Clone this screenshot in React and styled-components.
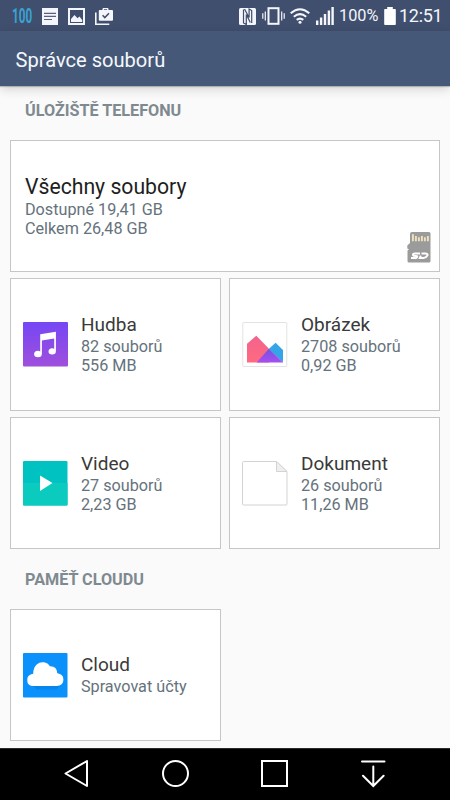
import React from 'react';
import styled, { createGlobalStyle } from 'styled-components';

const GlobalStyle = createGlobalStyle`
  * {
    box-sizing: border-box;
  }
  body {
    margin: 0;
    background: #fafafa;
    font-family: Roboto, 'Noto Sans', sans-serif;
  }
  svg {
    display: block;
    flex: none;
  }
`;

const Screen = styled.div`
  display: flex;
  flex-direction: column;
  width: 450px;
  height: 800px;
  overflow: hidden;
  background: #fafafa;
`;

const StatusBar = styled.header`
  display: flex;
  justify-content: space-between;
  align-items: center;
  flex: none;
  height: 31px;
  padding: 1px 10px 0 12px;
  background: #404f6e;
  color: #f4f6fb;
`;

const StatusGroup = styled.div`
  display: flex;
  align-items: center;
  gap: ${props => props.gap};
`;

const BatteryWidget = styled.span`
  width: 20px;
  height: 20px;
  font-size: 19.5px;
  font-weight: 700;
  line-height: 21px;
  color: #39a3d3;
  transform: scaleX(0.6);
  transform-origin: left center;
`;

const Percent = styled.span`
  width: 39px;
  font-size: 16.3px;
  line-height: 20px;
  white-space: nowrap;
`;

const Clock = styled.span`
  width: 41px;
  margin-left: -2px;
  font-size: 18px;
  line-height: 20px;
  letter-spacing: -0.3px;
  white-space: nowrap;
`;

const AppBar = styled.div`
  display: flex;
  align-items: center;
  flex: none;
  height: 55px;
  padding: 3px 15.5px 0;
  background: #465878;
  box-shadow: 0 1px 1px rgba(0, 0, 0, 0.2), 0 3px 10px rgba(0, 0, 0, 0.17);
  z-index: 1;
`;

const AppTitle = styled.h1`
  margin: 0;
  font-size: 20.1px;
  font-weight: 400;
  line-height: 24px;
  color: #f5f8fc;
`;

const Content = styled.main`
  flex: 1;
  padding: 0 10px;
`;

const SectionTitle = styled.h2`
  height: ${props => props.height};
  margin: 0;
  padding: ${props => props.top} 15px 0;
  font-size: 16.2px;
  font-weight: 700;
  line-height: 20px;
  color: #7f8a90;
`;

const Grid = styled.div`
  display: grid;
  grid-template-columns: 211px 211px;
  grid-template-rows: 132px 133px 132px;
  gap: 6px 8px;
`;

const CloudGrid = styled(Grid)`
  grid-template-rows: 132px;
`;

const Card = styled.section`
  display: flex;
  align-items: center;
  gap: 13px;
  grid-column: ${props => (props.wide ? '1 / -1' : 'auto')};
  padding: ${props => (props.wide ? '0 8px 0 14px' : '0 12px')};
  border: 1px solid #c4c6c7;
  background: #fff;
`;

const CardText = styled.div`
  flex: 1;
  padding-bottom: ${props => (props.large ? '0' : '1px')};
`;

const CardTitle = styled.h3`
  margin: 0;
  font-size: ${props => (props.large ? '21.2px' : '19px')};
  font-weight: 400;
  line-height: ${props => (props.large ? '26px' : '24px')};
  color: ${props => (props.large ? '#1e1e1e' : '#3a3a3a')};
  white-space: nowrap;
`;

const CardLine = styled.p`
  margin: 0;
  font-size: 16.2px;
  line-height: 19px;
  color: #65727c;
  white-space: nowrap;
`;

const SdSlot = styled.div`
  align-self: flex-end;
  padding-bottom: 8px;
`;

const NavBar = styled.nav`
  display: flex;
  align-items: center;
  flex: none;
  height: 52px;
  padding: 0 27px 2px;
  border-top: 1px solid #2a2a2a;
  background: #000;
`;

const NavButton = styled.button`
  display: flex;
  justify-content: center;
  width: 99px;
  padding: 0;
  border: 0;
  background: none;
`;

const NoteIcon = () => (
  <svg width="16" height="17" viewBox="0 0 16 17">
    <path fill="#f4f6fb" d="M0 0h16v17H0z" />
    <path stroke="#56627c" strokeWidth="1.2" d="M2 5.3h12M2 8.4h12M2 11.5h8" />
  </svg>
);

const PhotoIcon = () => (
  <svg width="17" height="17" viewBox="0 0 17 17">
    <path fill="none" stroke="#f4f6fb" strokeWidth="2" d="M1 1h15v15H1z" />
    <path fill="#f4f6fb" d="M3 14v-3l3.5-4 3 3.2 2-1.7L14.2 12v2z" />
  </svg>
);

const ShopIcon = () => (
  <svg width="18" height="17" viewBox="0 0 18 17">
    <path
      fill="#f4f6fb"
      fillRule="evenodd"
      d="M7.5 2V1q0-1 1-1h4q1 0 1 1v1H17q1 0 1 1v8.7q0 1-1 1H4.8q-1 0-1-1V3q0-1 1-1zM9 2h3V1.300H9z"
    />
    <path fill="none" stroke="#f4f6fb" strokeWidth="1.6" d="M.8 4.500v11.700h13.500" />
    <path fill="none" stroke="#404f6e" strokeWidth="1.5" d="M7.6 7.300l2.200 2.300 4.200-4.400" />
  </svg>
);

const NfcIcon = () => (
  <svg width="17" height="17" viewBox="0 0 17 17">
    <rect width="17" height="17" rx="1.5" fill="#f4f6fb" />
    <path
      fill="none"
      stroke="#404f6e"
      strokeWidth="1.2"
      d="M4.500 1.500V15l2.800 1.500V6.500l4 8M5.500 1l4.600 8.500V1l2.600 1.500V15"
    />
  </svg>
);

const VibrateIcon = () => (
  <svg width="23" height="18" viewBox="0 0 23 18">
    <rect x="6.5" y="1.2" width="10" height="15.6" fill="none" stroke="#f4f6fb" strokeWidth="2" />
    <path stroke="#f4f6fb" strokeWidth="1.2" d="M.8 6.300v5.400M3.300 4.500v9M19.700 4.500v9M22.200 6.300v5.400" />
  </svg>
);

const WifiIcon = () => (
  <svg width="20" height="16" viewBox="0 0 20 16">
    <g fill="none" stroke="#f4f6fb" strokeWidth="2">
      <path d="M.7 5.300q9.300-8 18.600 0" />
      <path d="M3.800 8.700q6.200-5.200 12.400 0" />
      <path d="M6.700 11.900q3.300-2.600 6.600 0" />
    </g>
    <circle cx="10" cy="14.3" r="1.5" fill="#f4f6fb" />
  </svg>
);

const SignalIcon = () => (
  <svg width="18" height="18" viewBox="0 0 18 18">
    <path
      fill="#f4f6fb"
      d="M0 13.500h2.400V18H0zM3.900 10.500h2.400V18H3.900zM7.800 7h2.400v11H7.800zM11.700 3.500h2.400V18h-2.400zM15.400 0h2.400v18h-2.400z"
    />
  </svg>
);

const BatteryIcon = () => (
  <svg width="12" height="18" viewBox="0 0 12 18">
    <path fill="#fff" d="M3.2 0h5.600v2H11q.8 0 .8.800v14.400q0 .8-.8.800H1q-.8 0-.8-.8V2.800Q.2 2 1 2h2.200z" />
  </svg>
);

const SdIcon = () => (
  <svg width="24" height="31" viewBox="0 0 24 31">
    <path
      fill="#9b9b9b"
      d="M5 0H22q1.500 0 1.500 1.500v27.500q0 1.500-1.500 1.500H2Q.5 30.500.5 29V18.500L2 17.300l-1.700-.8v-3L3 11V2q0-2 2-2z"
    />
    <path
      stroke="#eee3bd"
      strokeWidth="1.9"
      d="M5.900 2.200v7M8.900 4v5.200M11.900 5.200v4M14.900 4v5.200M17.900 5.200v4M20.900 4v5.200"
    />
    <path
      fill="none"
      stroke="#fff"
      strokeWidth="2"
      d="M13 21.500H8q-2 0-2 1.200t2.300 1.200q2.400 0 1.800 1.200t-2.300 1H4M14.500 21.500h3.800q3 0 2 2.200t-4 2.400h-3.500l1-2.500"
    />
  </svg>
);

const MusicIcon = () => (
  <svg width="45" height="45" viewBox="0 0 45 45">
    <defs>
      <linearGradient id="music" x1="0" y1="0" x2="0" y2="1">
        <stop offset="0" stopColor="#7547f5" />
        <stop offset="1" stopColor="#a04fdc" />
      </linearGradient>
    </defs>
    <rect width="45" height="44.500" rx="1" fill="url(#music)" />
    <path
      fill="#fff"
      d="M17.200 12.300l15.700-2.500v19.500q0 3.200-3.700 3.200t-3.700-3 3.800-3.300q1 0 1.900.5V16.500l-12.300 2v13.300q0 3.500-3.900 3.500t-3.900-3.200 3.900-3.300q1.200 0 2.200.6z"
    />
  </svg>
);

const PictureIcon = () => (
  <svg width="46" height="45" viewBox="0 0 46 45">
    <defs>
      <linearGradient id="pink" x1="0" y1="0" x2="0" y2="1">
        <stop offset="0" stopColor="#f2648d" />
        <stop offset="1" stopColor="#ff6a80" />
      </linearGradient>
      <linearGradient id="violet" x1="0" y1="0" x2="0" y2="1">
        <stop offset="0" stopColor="#6f55df" />
        <stop offset="1" stopColor="#a94df0" />
      </linearGradient>
    </defs>
    <rect x=".8" y=".5" width="44" height="44" rx=".5" fill="#fff" stroke="#e3e3e3" />
    <path fill="url(#pink)" d="M5 21.700l9.300-8L27 26.700V40.500H5z" />
    <path fill="#35a5e8" d="M26.700 27l6.900-6.300 7.400 7.200v12.600z" />
    <path fill="url(#violet)" d="M26.900 26.700L41 40.500H14.700z" />
  </svg>
);

const VideoIcon = () => (
  <svg width="45" height="45" viewBox="0 0 45 45">
    <rect width="44.5" height="44.5" rx="1" fill="#00c2c0" />
    <path fill="#0acbbd" d="M0 22h44.500v21.500q0 1-1 1H1q-1 0-1-1z" />
    <path fill="#fff" d="M17 14.500L29.500 22 17 30z" />
  </svg>
);

const DocumentIcon = () => (
  <svg width="46" height="45" viewBox="0 0 46 45">
    <path fill="#fff" stroke="#d3d3d3" d="M1.500.5h33l10.500 10V43q0 1-1 1H1.500q-1 0-1-1V1.500q0-1 1-1z" />
    <path fill="#efefef" stroke="#d3d3d3" d="M34.500.5v10H45z" />
  </svg>
);

const CloudIcon = () => (
  <svg width="45" height="45" viewBox="0 0 45 45">
    <rect width="44.5" height="44.5" rx="1" fill="#0a91fb" />
    <path fill="#0785ea" d="M7.500 31l7 5.500h19L39 30z" />
    <path
      fill="#fff"
      d="M10.500 33q-6.300 0-6.300-6 0-5.500 6-6.300 0-6 3.500-9.200 3-2.800 7.200-2.200 4 .6 6 4 7-.300 7.400 7 6.100 1 6.100 6.200 0 6.500-6.700 6.500z"
    />
  </svg>
);

const BackIcon = () => (
  <svg width="28" height="28" viewBox="0 0 28 28">
    <path fill="none" stroke="#fff" strokeWidth="2" strokeLinejoin="round" d="M24 1v25L2.500 13.500z" />
  </svg>
);

const HomeIcon = () => (
  <svg width="28" height="28" viewBox="0 0 28 28">
    <circle cx="13.5" cy="13.5" r="12.5" fill="none" stroke="#fff" strokeWidth="2" />
  </svg>
);

const RecentIcon = () => (
  <svg width="28" height="28" viewBox="0 0 28 28">
    <path fill="none" stroke="#fff" strokeWidth="2" d="M1 1h25v25H1z" />
  </svg>
);

const PullDownIcon = () => (
  <svg width="28" height="28" viewBox="0 0 28 28">
    <path
      fill="none"
      stroke="#fff"
      strokeWidth="2"
      strokeLinecap="round"
      d="M2 1.500h22.500M13.300 6.500v19M3 15.700l10.300 10.300 10.300-10.300"
    />
  </svg>
);

const categories = [
  { title: 'Hudba', lines: ['82 souborů', '556 MB'], Icon: MusicIcon },
  { title: 'Obrázek', lines: ['2708 souborů', '0,92 GB'], Icon: PictureIcon },
  { title: 'Video', lines: ['27 souborů', '2,23 GB'], Icon: VideoIcon },
  { title: 'Dokument', lines: ['26 souborů', '11,26 MB'], Icon: DocumentIcon },
];

const navButtons = [
  { label: 'Zpět', Icon: BackIcon },
  { label: 'Domů', Icon: HomeIcon },
  { label: 'Poslední', Icon: RecentIcon },
  { label: 'Oznámení', Icon: PullDownIcon },
];

function CategoryCard({ title, lines, Icon }) {
  return (
    <Card>
      <Icon />
      <CardText>
        <CardTitle>{title}</CardTitle>
        {lines.map(line => (
          <CardLine key={line}>{line}</CardLine>
        ))}
      </CardText>
    </Card>
  );
}

function App() {
  return (
    <Screen>
      <GlobalStyle />
      <StatusBar>
        <StatusGroup gap="10px">
          <BatteryWidget>100</BatteryWidget>
          <NoteIcon />
          <PhotoIcon />
          <ShopIcon />
        </StatusGroup>
        <StatusGroup gap="5.5px">
          <NfcIcon />
          <VibrateIcon />
          <WifiIcon />
          <SignalIcon />
          <Percent>100%</Percent>
          <BatteryIcon />
          <Clock>12:51</Clock>
        </StatusGroup>
      </StatusBar>
      <AppBar>
        <AppTitle>Správce souborů</AppTitle>
      </AppBar>
      <Content>
        <SectionTitle height="54px" top="15px">
          ÚLOŽIŠTĚ TELEFONU
        </SectionTitle>
        <Grid>
          <Card wide>
            <CardText large>
              <CardTitle large>Všechny soubory</CardTitle>
              <CardLine>Dostupné 19,41 GB</CardLine>
              <CardLine>Celkem 26,48 GB</CardLine>
            </CardText>
            <SdSlot>
              <SdIcon />
            </SdSlot>
          </Card>
          {categories.map(category => (
            <CategoryCard key={category.title} {...category} />
          ))}
        </Grid>
        <SectionTitle height="60px" top="21px">
          PAMĚŤ CLOUDU
        </SectionTitle>
        <CloudGrid>
          <CategoryCard
            title="Cloud"
            lines={['Spravovat účty']}
            Icon={CloudIcon}
          />
        </CloudGrid>
      </Content>
      <NavBar>
        {navButtons.map(({ label, Icon }) => (
          <NavButton key={label} aria-label={label}>
            <Icon />
          </NavButton>
        ))}
      </NavBar>
    </Screen>
  );
}

export default App;
